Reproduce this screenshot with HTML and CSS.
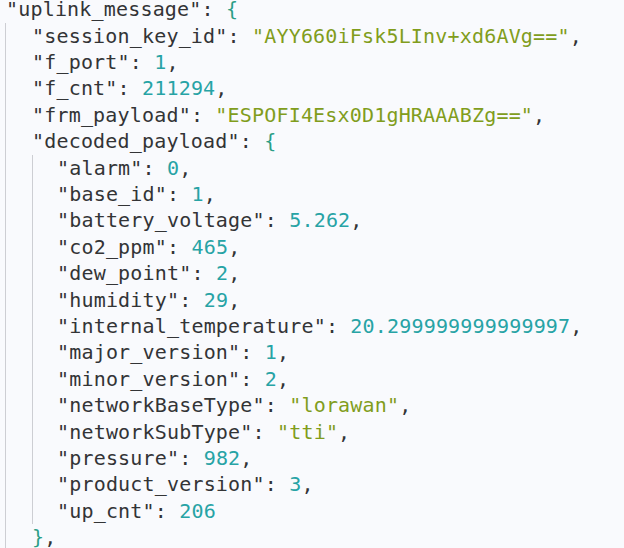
FILE: index.html
```html
<!DOCTYPE html>
<html>
<head>
<meta charset="utf-8">
<link rel="stylesheet" href="styles.css">
</head>
<body>
<div class="code">
  <div class="ln l0"><span class="k">"uplink_message"</span>: <span class="br">{</span></div>
  <div class="blk b1">
    <div class="ln"><span class="k">"session_key_id"</span>: <span class="s">"AYY660iFsk5LInv+xd6AVg=="</span>,</div>
    <div class="ln"><span class="k">"f_port"</span>: <span class="n">1</span>,</div>
    <div class="ln"><span class="k">"f_cnt"</span>: <span class="n">211294</span>,</div>
    <div class="ln"><span class="k">"frm_payload"</span>: <span class="s">"ESPOFI4Esx0D1gHRAAABZg=="</span>,</div>
    <div class="ln"><span class="k">"decoded_payload"</span>: <span class="br">{</span></div>
    <div class="blk b2">
      <div class="ln"><span class="k">"alarm"</span>: <span class="n">0</span>,</div>
      <div class="ln"><span class="k">"base_id"</span>: <span class="n">1</span>,</div>
      <div class="ln"><span class="k">"battery_voltage"</span>: <span class="n">5.262</span>,</div>
      <div class="ln"><span class="k">"co2_ppm"</span>: <span class="n">465</span>,</div>
      <div class="ln"><span class="k">"dew_point"</span>: <span class="n">2</span>,</div>
      <div class="ln"><span class="k">"humidity"</span>: <span class="n">29</span>,</div>
      <div class="ln"><span class="k">"internal_temperature"</span>: <span class="n">20.299999999999997</span>,</div>
      <div class="ln"><span class="k">"major_version"</span>: <span class="n">1</span>,</div>
      <div class="ln"><span class="k">"minor_version"</span>: <span class="n">2</span>,</div>
      <div class="ln"><span class="k">"networkBaseType"</span>: <span class="s">"lorawan"</span>,</div>
      <div class="ln"><span class="k">"networkSubType"</span>: <span class="s">"tti"</span>,</div>
      <div class="ln"><span class="k">"pressure"</span>: <span class="n">982</span>,</div>
      <div class="ln"><span class="k">"product_version"</span>: <span class="n">3</span>,</div>
      <div class="ln"><span class="k">"up_cnt"</span>: <span class="n">206</span></div>
    </div>
    <div class="ln"><span class="br">}</span>,</div>
  </div>
</div>
</body>
</html>
```
FILE: styles.css
```css
html, body {
  margin: 0;
  padding: 0;
  background: #f9fafd;
  overflow: hidden;
}
.code {
  margin-top: -3.7px;
  font-family: "DejaVu Sans Mono", "Liberation Mono", monospace;
  font-size: 20px;
  letter-spacing: 0.18px;
  line-height: 26.4px;
  color: #333436;
}
.ln {
  height: 26.4px;
  white-space: pre;
}
.l0 {
  padding-left: 6px;
}
.blk {
  border-left: 1px solid #cdced3;
}
.b1 {
  margin-left: 5px;
  padding-left: 26px;
}
.b2 {
  padding-left: 24px;
}
.k { color: #333436; }
.s { color: #819d1c; }
.n { color: #27a3a5; }
.br { color: #2b9e86; }
```
